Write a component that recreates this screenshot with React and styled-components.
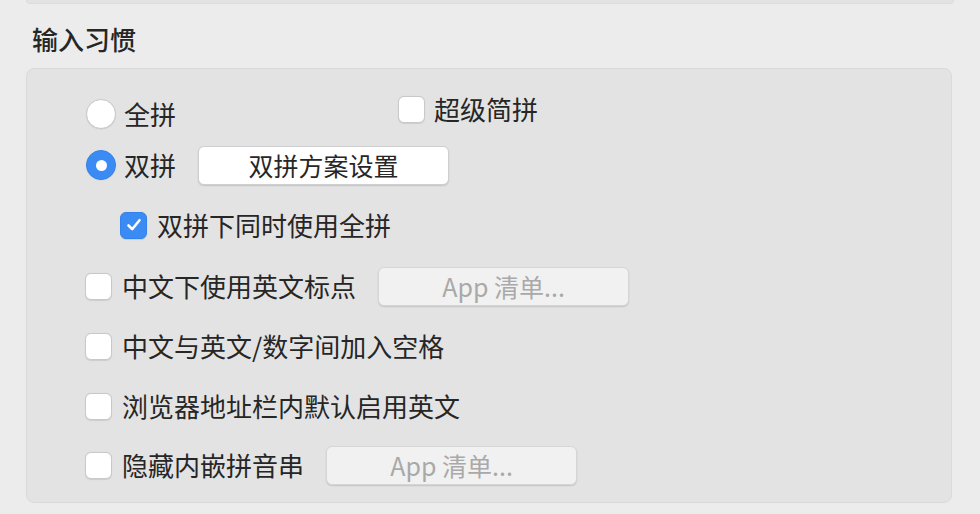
import React from "react";
import styled, { createGlobalStyle } from "styled-components";

const GlobalStyle = createGlobalStyle`
  body {
    margin: 0;
    background: #ececec;
    font-family: "Noto Sans CJK SC", "Noto Sans", sans-serif;
    color: #262626;
  }
`;

const Page = styled.div`
  width: 980px;
  height: 514px;
  overflow: hidden;
`;

const TopPanel = styled.div`
  margin-left: 26px;
  width: 926px;
  height: 3px;
  background: #e3e3e3;
  border: 1px solid #dcdcdc;
  border-top: none;
  border-radius: 0 0 8px 8px;
`;

const SectionTitle = styled.h2`
  margin: 0 0 0 32px;
  padding-top: 17px;
  font-size: 26px;
  font-weight: 500;
  line-height: 36px;
  height: 47px;
`;

const Panel = styled.div`
  margin-left: 26px;
  width: 926px;
  height: 435px;
  background: #e3e3e3;
  border: 1px solid #dadada;
  border-radius: 8px;
  padding: 25px 0 0 58px;
  box-sizing: border-box;
  display: flex;
  flex-direction: column;
`;

const Row = styled.div`
  display: flex;
  align-items: center;
  height: 40px;
  margin-top: ${(p) => p.$top || 0}px;
  padding-left: ${(p) => p.$indent || 0}px;
`;

const Option = styled.label`
  display: flex;
  align-items: center;
  width: ${(p) => (p.$width ? `${p.$width}px` : "auto")};
  transform: translateY(${(p) => p.$shift || 0}px);
`;

const Label = styled.span`
  font-size: 26px;
  line-height: 36px;
  margin-left: ${(p) => p.$gap || 10}px;
  white-space: nowrap;
`;

const RadioDot = styled.span`
  width: 30px;
  height: 30px;
  margin-left: 1px;
  border-radius: 50%;
  box-sizing: border-box;
  flex-shrink: 0;
  display: flex;
  align-items: center;
  justify-content: center;
  background: ${(p) => (p.$on ? "#3b8bf5" : "#ffffff")};
  border: 1px solid ${(p) => (p.$on ? "#3581ea" : "#c9c9c9")};
  box-shadow: 0 0.5px 1px rgba(0, 0, 0, 0.12);
  &::after {
    content: "";
    display: ${(p) => (p.$on ? "block" : "none")};
    width: 11px;
    height: 11px;
    border-radius: 50%;
    background: #ffffff;
  }
`;

const Box = styled.span`
  width: 27px;
  height: 27px;
  border-radius: 6px;
  box-sizing: border-box;
  flex-shrink: 0;
  display: flex;
  align-items: center;
  justify-content: center;
  background: ${(p) => (p.$on ? "#3b8bf5" : "#ffffff")};
  border: 1px solid ${(p) => (p.$on ? "#3581ea" : "#c9c9c9")};
  box-shadow: 0 0.5px 1px rgba(0, 0, 0, 0.1);
`;

const Button = styled.button`
  margin-left: 22px;
  width: 251px;
  height: 39px;
  border-radius: 6px;
  font-family: inherit;
  font-size: 25px;
  padding: 0;
  line-height: 34px;
  background: ${(p) => (p.disabled ? "#f1f1f1" : "#ffffff")};
  color: ${(p) => (p.disabled ? "#a9a9a9" : "#262626")};
  border: 1px solid ${(p) => (p.disabled ? "#d6d6d6" : "#cfcfcf")};
  box-shadow: 0 1px 1.5px rgba(0, 0, 0, 0.14);
`;

const Check = () => (
  <svg width="18" height="18" viewBox="0 0 18 18">
    <path
      d="M3.5 9.5 L7.2 13.2 L14.5 4.2"
      fill="none"
      stroke="#fff"
      strokeWidth="2.6"
      strokeLinecap="round"
      strokeLinejoin="round"
    />
  </svg>
);

const CheckOption = ({ on, children }) => (
  <Option>
    <Box $on={on}>{on && <Check />}</Box>
    <Label>{children}</Label>
  </Option>
);

export default function App() {
  return (
    <Page>
      <GlobalStyle />
      <TopPanel />
      <SectionTitle>输入习惯</SectionTitle>
      <Panel>
        <Row>
          <Option $width={313}>
            <RadioDot />
            <Label $gap={8}>全拼</Label>
          </Option>
          <Option $shift={-5}>
            <Box />
            <Label $gap={9}>超级简拼</Label>
          </Option>
        </Row>
        <Row $top={11}>
          <Option>
            <RadioDot $on />
            <Label $gap={8}>双拼</Label>
          </Option>
          <Button>双拼方案设置</Button>
        </Row>
        <Row $top={20} $indent={35}>
          <CheckOption on>双拼下同时使用全拼</CheckOption>
        </Row>
        <Row $top={21}>
          <CheckOption>中文下使用英文标点</CheckOption>
          <Button disabled>App 清单...</Button>
        </Row>
        <Row $top={20}>
          <CheckOption>中文与英文/数字间加入空格</CheckOption>
        </Row>
        <Row $top={20}>
          <CheckOption>浏览器地址栏内默认启用英文</CheckOption>
        </Row>
        <Row $top={19}>
          <CheckOption>隐藏内嵌拼音串</CheckOption>
          <Button disabled>App 清单...</Button>
        </Row>
      </Panel>
    </Page>
  );
}
